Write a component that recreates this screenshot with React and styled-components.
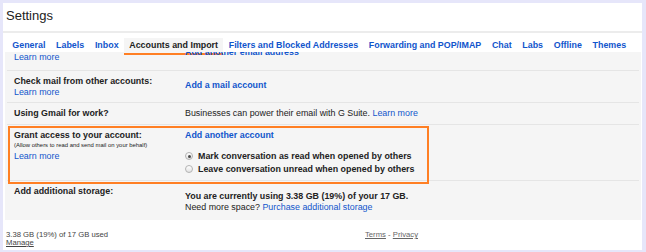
import React from 'react';
import styled, { createGlobalStyle } from 'styled-components';

const GlobalStyle = createGlobalStyle`
  html, body { margin: 0; padding: 0; background: #e6e6fa; }
  body {
    font-family: "Liberation Sans", Arial, sans-serif;
    color: #222;
  }
  * { box-sizing: border-box; }
`;

const Card = styled.div`
  margin: 3px 4px 3px 3px;
  background: #fff;
  display: flex;
  flex-direction: column;
`;

const Header = styled.div`
  padding: 5px 3px 8px;
  font-size: 13px;
  line-height: 15px;
  color: #222;
  border-bottom: 2px solid #ececec;
`;

const TabBar = styled.nav`
  display: flex;
  align-items: flex-end;
  height: 19px;
  padding-left: 4px;
`;

const Tab = styled.a`
  position: relative;
  padding: 0 5.35px;
  height: 14px;
  line-height: 14px;
  font-size: 8.9px;
  font-weight: bold;
  white-space: nowrap;
  text-decoration: none;
  color: ${p => (p.$active ? '#222' : '#15c')};
  background: ${p => (p.$active ? '#f5f5f5' : 'transparent')};
`;

const Highlight = styled.span`
  position: absolute;
  left: 0;
  right: 0;
  top: calc(100% + 1px);
  height: 2px;
  background: #ff7f24;
`;

const Content = styled.div`
  margin: 0 1px 0 2px;
  background: #f5f5f5;
  overflow: hidden;
  padding-bottom: 2px;
  font-size: 8.9px;
  line-height: 10.5px;
`;

const Row = styled.div`
  position: relative;
  display: grid;
  grid-template-columns: 171px 1fr;
  margin: 0 2px;
  padding: 5px 0 5px 7px;
  border-bottom: 1px solid ${p => (p.$last ? 'transparent' : '#e5e5e5')};
`;

const ClippedRow = styled(Row)`
  margin-top: -22px;
  height: 41px;
  align-items: end;
`;

const LabelCell = styled.div`
  display: flex;
  flex-direction: column;
  padding-bottom: ${p => p.$pb || 0}px;
`;

const ValueCell = styled.div`
  display: flex;
  flex-direction: column;
  padding-top: ${p => p.$pt || 0}px;
  padding-bottom: ${p => p.$pb || 0}px;
`;

const Label = styled.span`
  font-weight: bold;
  color: #222;
`;

const Hint = styled.span`
  font-size: 5.9px;
  color: #222;
`;

const Link = styled.a`
  color: #15c;
  text-decoration: none;
  font-weight: ${p => (p.$bold ? 'bold' : 'normal')};
  cursor: pointer;
`;

const Text = styled.span`
  font-weight: ${p => (p.$bold ? 'bold' : 'normal')};
  color: #222;
`;

const Options = styled.div`
  margin-top: 10px;
  display: flex;
  flex-direction: column;
`;

const Option = styled.label`
  display: flex;
  align-items: center;
  height: 12.5px;
  font-weight: bold;
  color: #222;
`;

const Radio = styled.span`
  position: relative;
  display: inline-flex;
  align-items: center;
  justify-content: center;
  width: 8px;
  height: 8px;
  margin-right: 5px;
  border-radius: 50%;
  border: 1px solid #b3b3b3;
  background: linear-gradient(#ffffff, #e2e2e2);
  &::after {
    content: "";
    display: ${p => (p.$checked ? 'block' : 'none')};
    width: 3px;
    height: 3px;
    border-radius: 50%;
    background: #4a4a4a;
  }
`;

const Annotation = styled.div`
  position: absolute;
  top: 1.5px;
  left: 1px;
  width: 421px;
  height: 58px;
  border: 2px solid #ff7f24;
  pointer-events: none;
`;

const Footer = styled.div`
  display: grid;
  grid-template-columns: 359px auto;
  padding: 11px 3px 3px;
  font-size: 7.7px;
  line-height: 8px;
  color: #444;
`;

const FooterCol = styled.div`
  display: flex;
  flex-direction: column;
`;

const FooterLink = styled.a`
  color: ${p => (p.$muted ? '#666' : '#444')};
  text-decoration: underline;
`;

const Sep = styled.span`
  color: #666;
`;

const tabs = [
  'General',
  'Labels',
  'Inbox',
  'Accounts and Import',
  'Filters and Blocked Addresses',
  'Forwarding and POP/IMAP',
  'Chat',
  'Labs',
  'Offline',
  'Themes',
];

export default function App() {
  return (
    <>
      <GlobalStyle />
      <Card>
        <Header>Settings</Header>
        <TabBar>
          {tabs.map(t => (
            <Tab key={t} $active={t === 'Accounts and Import'}>
              {t}
              {t === 'Accounts and Import' && <Highlight />}
            </Tab>
          ))}
        </TabBar>
        <Content>
          <ClippedRow>
            <LabelCell $pb={2.5}>
              <Link>Learn more</Link>
            </LabelCell>
            <ValueCell $pb={8}>
              <Link $bold>Add another email address</Link>
            </ValueCell>
          </ClippedRow>
          <Row>
            <LabelCell>
              <Label>Check mail from other accounts:</Label>
              <Link>Learn more</Link>
            </LabelCell>
            <ValueCell $pt={4}>
              <Link $bold>Add a mail account</Link>
            </ValueCell>
          </Row>
          <Row>
            <LabelCell>
              <Label>Using Gmail for work?</Label>
            </LabelCell>
            <ValueCell>
              <span>
                <Text>Businesses can power their email with G Suite. </Text>
                <Link>Learn more</Link>
              </span>
            </ValueCell>
          </Row>
          <Row>
            <LabelCell>
              <Label>Grant access to your account:</Label>
              <Hint>(Allow others to read and send mail on your behalf)</Hint>
              <Link>Learn more</Link>
            </LabelCell>
            <ValueCell>
              <Link $bold>Add another account</Link>
              <Options>
                <Option>
                  <Radio $checked />
                  Mark conversation as read when opened by others
                </Option>
                <Option>
                  <Radio />
                  Leave conversation unread when opened by others
                </Option>
              </Options>
            </ValueCell>
            <Annotation />
          </Row>
          <Row $last>
            <LabelCell>
              <Label>Add additional storage:</Label>
            </LabelCell>
            <ValueCell $pt={5}>
              <Text $bold>You are currently using 3.38 GB (19%) of your 17 GB.</Text>
              <span>
                <Text>Need more space? </Text>
                <Link>Purchase additional storage</Link>
              </span>
            </ValueCell>
          </Row>
        </Content>
        <Footer>
          <FooterCol>
            <span>3.38 GB (19%) of 17 GB used</span>
            <span>
              <FooterLink>Manage</FooterLink>
            </span>
          </FooterCol>
          <FooterCol>
            <span>
              <FooterLink $muted>Terms</FooterLink>
              <Sep> - </Sep>
              <FooterLink $muted>Privacy</FooterLink>
            </span>
          </FooterCol>
        </Footer>
      </Card>
    </>
  );
}
